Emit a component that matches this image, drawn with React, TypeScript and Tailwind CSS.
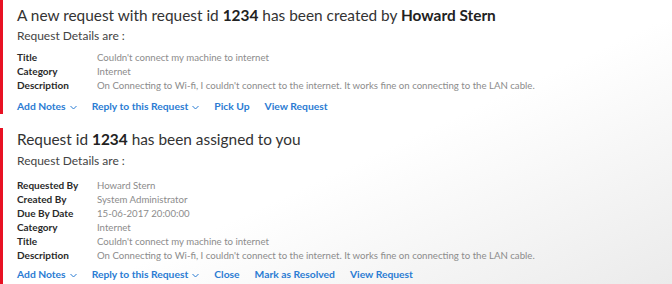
import React from "react";

const font = { fontFamily: 'Lato, "Open Sans", sans-serif' };

function Chevron() {
  return (
    <svg width="7" height="5" viewBox="0 0 7 5" className="ml-[4px] inline-block" fill="none">
      <path d="M0.5 1 L3.5 4 L6.5 1" stroke="#2b7cd3" strokeWidth="1" />
    </svg>
  );
}

function Links({ items }: { items: { label: string; dd?: boolean }[] }) {
  return (
    <div className="flex items-center gap-[15px] h-[16px] text-[10.3px] font-bold text-[#2b7cd3]">
      {items.map((it) => (
        <span key={it.label} className="flex items-center whitespace-nowrap">
          {it.label}
          {it.dd && <Chevron />}
        </span>
      ))}
    </div>
  );
}

function Rows({ rows }: { rows: [string, string][] }) {
  return (
    <div className="flex flex-col">
      {rows.map(([k, v]) => (
        <div key={k} className="flex h-[14px] items-center leading-[14px]">
          <span className="w-[80px] shrink-0 text-[10px] font-bold text-[#2a2a2a]">{k}</span>
          <span className="text-[9.65px] text-[#8c8c8c] whitespace-nowrap">{v}</span>
        </div>
      ))}
    </div>
  );
}

const desc =
  "On Connecting to Wi-fi, I couldn't connect to the internet. It works fine on connecting to the LAN cable.";

export default function App() {
  return (
    <div
      style={font}
      className="w-[672px] h-[284px] overflow-hidden bg-[linear-gradient(155deg,#ffffff_55%,#ebebeb_100%)]"
    >
      <div className="h-[114px] border-l-[3px] border-[#e81123] pl-[14px] pt-[4px]">
        <div className="h-[22px] leading-[22px] text-[15.4px] text-[#333] whitespace-nowrap">
          A new request with request id <b className="font-bold text-[#222]">1234</b> has been created by{" "}
          <b className="font-bold text-[#222]">Howard Stern</b>
        </div>
        <div className="mt-[2px] h-[16px] leading-[16px] text-[12px] text-[#444]">Request Details are :</div>
        <div className="mt-[6px]">
          <Rows
            rows={[
              ["Title", "Couldn't connect my machine to internet"],
              ["Category", "Internet"],
              ["Description", desc],
            ]}
          />
        </div>
        <div className="mt-[7px]">
          <Links
            items={[
              { label: "Add Notes", dd: true },
              { label: "Reply to this Request", dd: true },
              { label: "Pick Up" },
              { label: "View Request" },
            ]}
          />
        </div>
      </div>
      <div className="mt-[14px] h-[156px] border-l-[3px] border-[#e81123] pl-[14px]">
        <div className="h-[22px] leading-[22px] text-[15.4px] text-[#333] whitespace-nowrap">
          Request id <b className="font-bold text-[#222]">1234</b> has been assigned to you
        </div>
        <div className="mt-[3px] h-[16px] leading-[16px] text-[12px] text-[#444]">Request Details are :</div>
        <div className="mt-[9px]">
          <Rows
            rows={[
              ["Requested By", "Howard Stern"],
              ["Created By", "System Administrator"],
              ["Due By Date", "15-06-2017 20:00:00"],
              ["Category", "Internet"],
              ["Title", "Couldn't connect my machine to internet"],
              ["Description", desc],
            ]}
          />
        </div>
        <div className="mt-[5px]">
          <Links
            items={[
              { label: "Add Notes", dd: true },
              { label: "Reply to this Request", dd: true },
              { label: "Close" },
              { label: "Mark as Resolved" },
              { label: "View Request" },
            ]}
          />
        </div>
      </div>
    </div>
  );
}
